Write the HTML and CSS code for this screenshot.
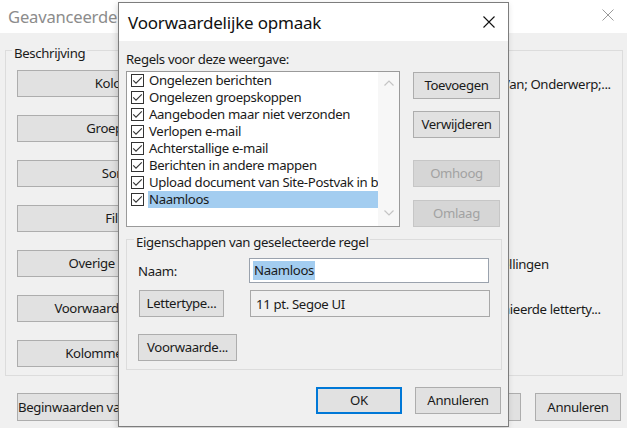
FILE: index.html
```html
<!DOCTYPE html>
<html lang="nl">
<head>
<meta charset="utf-8">
<title>Voorwaardelijke opmaak</title>
<link rel="stylesheet" href="styles.css">
</head>
<body>
<div class="screen">
  <div class="bgwin">
    <div class="bg-title">
      <span class="bg-title-text">Geavanceerde weergave-instellingen: Compact</span>
      <svg class="bg-close" width="12" height="12" viewBox="0 0 12 12"><path d="M0.5 0.5L11.5 11.5M11.5 0.5L0.5 11.5" stroke="#9a9a9a" stroke-width="1" fill="none"/></svg>
    </div>
    <div class="bg-body">
      <fieldset class="bg-group">
        <legend class="legend bg-legend">Beschrijving</legend>
        <div class="bg-row"><button class="btn bg-btn">Kolommen...</button><span class="bg-desc">Van; Onderwerp;...</span></div>
        <div class="bg-row"><button class="btn bg-btn">Groeperen op...</button><span class="bg-desc"></span></div>
        <div class="bg-row"><button class="btn bg-btn">Sorteren...</button><span class="bg-desc"></span></div>
        <div class="bg-row"><button class="btn bg-btn">Filteren...</button><span class="bg-desc"></span></div>
        <div class="bg-row"><button class="btn bg-btn">Overige instellingen...</button><span class="bg-desc">ellingen</span></div>
        <div class="bg-row"><button class="btn bg-btn">Voorwaardelijke opmaak...</button><span class="bg-desc">hieerde letterty...</span></div>
        <div class="bg-row"><button class="btn bg-btn">Kolommen opmaken...</button><span class="bg-desc"></span></div>
      </fieldset>
      <div class="bg-footer">
        <button class="btn bg-reset">Beginwaarden van weergave herstellen</button>
        <button class="btn bg-ok">OK</button>
        <button class="btn bg-cancel">Annuleren</button>
      </div>
    </div>
  </div>

  <div class="dlg">
    <div class="dlg-title">
      <span class="dlg-title-text">Voorwaardelijke opmaak</span>
      <svg class="dlg-close" width="12" height="12" viewBox="0 0 12 12"><path d="M0.5 0.5L11.5 11.5M11.5 0.5L0.5 11.5" stroke="#111" stroke-width="1.1" fill="none"/></svg>
    </div>
    <div class="dlg-body">
      <div class="rules-label">Regels voor deze weergave:</div>
      <div class="rules">
        <div class="list">
          <div class="items">
            <div class="item"><span class="cb"></span><span class="item-text">Ongelezen berichten</span></div>
            <div class="item"><span class="cb"></span><span class="item-text">Ongelezen groepskoppen</span></div>
            <div class="item"><span class="cb"></span><span class="item-text">Aangeboden maar niet verzonden</span></div>
            <div class="item"><span class="cb"></span><span class="item-text">Verlopen e-mail</span></div>
            <div class="item"><span class="cb"></span><span class="item-text">Achterstallige e-mail</span></div>
            <div class="item"><span class="cb"></span><span class="item-text">Berichten in andere mappen</span></div>
            <div class="item"><span class="cb"></span><span class="item-text">Upload document van Site-Postvak in b</span></div>
            <div class="item"><span class="cb"></span><span class="item-text selected">Naamloos</span></div>
          </div>
          <div class="scroll">
            <svg class="arrow" width="10" height="6" viewBox="0 0 10 6"><path d="M0.5 5.5L5 1L9.5 5.5" stroke="#c4c4c4" stroke-width="1.2" fill="none"/></svg>
            <svg class="arrow" width="10" height="6" viewBox="0 0 10 6"><path d="M0.5 0.5L5 5L9.5 0.5" stroke="#c4c4c4" stroke-width="1.2" fill="none"/></svg>
          </div>
        </div>
        <div class="side">
          <button class="btn side-btn">Toevoegen</button>
          <button class="btn side-btn">Verwijderen</button>
          <button class="btn side-btn disabled gap-big">Omhoog</button>
          <button class="btn side-btn disabled">Omlaag</button>
        </div>
      </div>
      <fieldset class="props">
        <legend class="legend dlg-legend">Eigenschappen van geselecteerde regel</legend>
        <div class="prop-row">
          <span class="prop-label">Naam:</span>
          <div class="field input"><span class="sel-text">Naamloos</span></div>
        </div>
        <div class="prop-row row-font">
          <button class="btn font-btn">Lettertype...</button>
          <div class="field readonly">11 pt. Segoe UI</div>
        </div>
        <div class="prop-row row-cond">
          <button class="btn cond-btn">Voorwaarde...</button>
        </div>
      </fieldset>
      <div class="dlg-footer">
        <button class="btn foot-btn default">OK</button>
        <button class="btn foot-btn">Annuleren</button>
      </div>
    </div>
  </div>
</div>
</body>
</html>
```
FILE: styles.css
```css
* { box-sizing: border-box; }
html, body { margin: 0; padding: 0; }
body {
  width: 627px;
  height: 428px;
  overflow: hidden;
  font-family: "Noto Sans", "Open Sans", sans-serif;
  font-size: 13.2px;
  letter-spacing: -0.35px;
  color: #1a1a1a;
  background: #f0f0f0;
}
.screen { position: relative; width: 627px; height: 428px; overflow: hidden; }

.btn {
  font: inherit;
  letter-spacing: inherit;
  color: #1a1a1a;
  background: #e1e1e1;
  border: 1px solid #adadad;
  border-radius: 0;
  padding: 0;
  height: 27px;
  line-height: 25px;
  text-align: center;
  white-space: nowrap;
}

.legend {
  padding: 6px 2px 0 2px;
  line-height: 18px;
  white-space: nowrap;
}
.bg-legend { margin-left: -5px; }
.dlg-legend { margin-left: -4px; }

/* ---------- background window ---------- */
.bgwin { width: 627px; height: 428px; display: flex; flex-direction: column; }
.bg-title {
  height: 33px;
  background: #fff;
  display: flex;
  align-items: center;
  justify-content: space-between;
  padding: 0 13px 0 8px;
  flex: none;
}
.bg-title-text { font-size: 16.6px; color: #8c8c8c; letter-spacing: -0.2px; white-space: nowrap; }
.bg-close { margin-top: -3px; }
.bg-body { flex: 1; padding: 5px 5px 0 5px; display: flex; flex-direction: column; }
.bg-group {
  margin: 0;
  border: 1px solid #dcdcdc;
  padding: 8px 11px 8px 11px;
  display: flex;
  flex-direction: column;
  gap: 18px;
}
.bg-row { display: flex; align-items: center; gap: 255px; height: 27px; }
.bg-btn { width: 230px; flex: none; }
.bg-desc { white-space: nowrap; padding-top: 1px; }
.bg-footer { display: flex; margin-top: 17px; padding: 0 1px 0 12px; }
.bg-reset { width: 230px; height: 28px; }
.bg-ok { width: 86px; height: 28px; margin-left: auto; }
.bg-cancel { width: 86px; height: 28px; margin-left: 14px; }

/* ---------- front dialog ---------- */
.dlg {
  position: absolute;
  left: 118px;
  top: 2px;
  width: 391px;
  height: 425px;
  border: 1px solid #7d7d7d;
  background: #f0f0f0;
  box-shadow: -1px 2px 6px rgba(0,0,0,0.16);
  display: flex;
  flex-direction: column;
}
.dlg-title {
  height: 38px;
  background: #fff;
  display: flex;
  align-items: center;
  justify-content: space-between;
  padding: 0 13px 0 9px;
  flex: none;
}
.dlg-title-text { font-size: 17px; letter-spacing: -0.2px; color: #111; }
.dlg-body { flex: 1; padding: 9px 7px 0 7px; display: flex; flex-direction: column; }
.rules-label { line-height: 18px; }
.rules { display: flex; gap: 13px; margin-top: 3px; }
.list {
  width: 274px;
  height: 156px;
  background: #fff;
  border: 1px solid #9a9a9a;
  display: flex;
}
.items { flex: 1; padding-left: 4px; min-width: 0; }
.item { height: 17px; display: flex; align-items: center; gap: 4px; }
.cb {
  flex: none;
  width: 13px;
  height: 13px;
  border: 1px solid #333;
  background: #fff url("data:image/svg+xml,%3Csvg xmlns='http://www.w3.org/2000/svg' width='11' height='11' viewBox='0 0 11 11'%3E%3Cpath d='M1.2 5.4L4 8.2L9.8 2.4' stroke='%23333' stroke-width='1.1' fill='none'/%3E%3C/svg%3E") center / 11px 11px no-repeat;
}
.item-text {
  flex: 1;
  height: 17px;
  line-height: 17px;
  padding-left: 1px;
  white-space: nowrap;
  overflow: hidden;
}
.item-text.selected { background: #a3cdf0; }
.scroll {
  width: 21px;
  flex: none;
  background: #f7f7f7;
  display: flex;
  flex-direction: column;
  justify-content: space-between;
  align-items: center;
  padding: 8px 0 10px 0;
}
.side { display: flex; flex-direction: column; gap: 12px; padding-top: 1px; }
.side-btn { width: 87px; }
.side-btn.gap-big { margin-top: 10px; }
.btn.disabled { background: #d6d6d6; border-color: #c6c6c6; color: #a2a2a2; }
.side-btn.disabled + .side-btn.disabled { margin-top: 1px; }

.props {
  margin: 0;
  border: 1px solid #dcdcdc;
  padding: 7px 11px 8px 11px;
  display: flex;
  flex-direction: column;
}
.prop-row { display: flex; align-items: center; }
.prop-label { width: 111px; flex: none; }
.field {
  width: 240px;
  height: 25px;
  border: 1px solid #a8a8a8;
  display: flex;
  align-items: center;
  padding-left: 3px;
  white-space: nowrap;
}
.field.input { background: #fff; border-color: #9aa2ad; }
.sel-text { background: #a3cdf0; padding: 0 1px; line-height: 19px; }
.row-font { margin-top: 7px; }
.field.readonly { background: #f0f0f0; height: 27px; padding-left: 5px; }
.font-btn { width: 85px; margin-right: 26px; margin-left: 1px; }
.row-cond { margin-top: 17px; }
.cond-btn { width: 99px; }

.dlg-footer { display: flex; justify-content: flex-end; gap: 13px; margin-top: 17px; }
.foot-btn { width: 86px; }
.foot-btn.default { border: 2px solid #0078d7; line-height: 23px; }
```
